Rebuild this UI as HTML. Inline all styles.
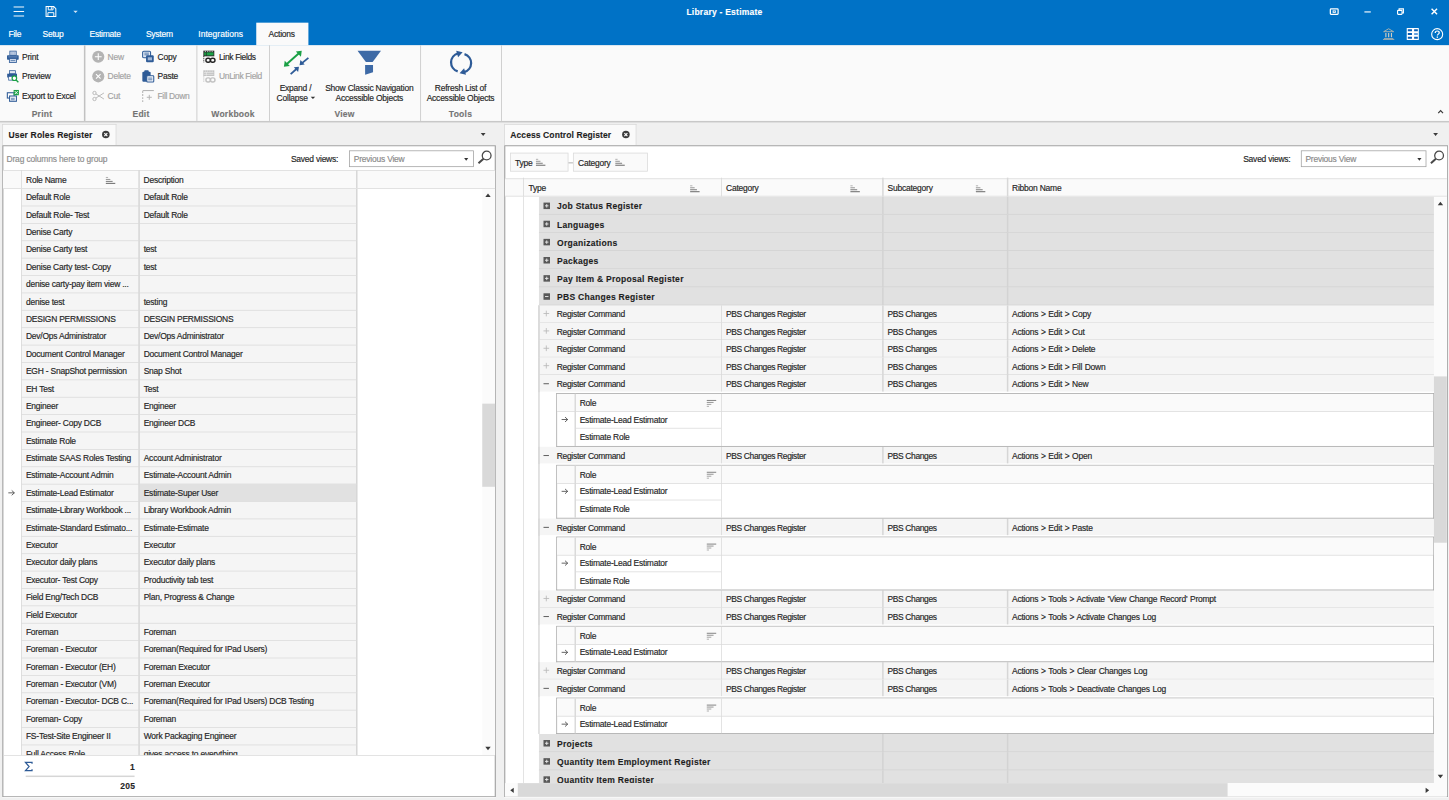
<!DOCTYPE html>
<html><head><meta charset="utf-8"><title>Library - Estimate</title>
<style>
html,body{margin:0;padding:0;}
body{width:1449px;height:800px;overflow:hidden;background:#f0f0f0;position:relative;}
#root{position:absolute;left:0;top:0;width:1916.92px;height:1058.34px;transform:scale(0.7559);transform-origin:0 0;
 font-family:"Liberation Sans",sans-serif;font-size:11.2px;letter-spacing:-0.28px;color:#262626;overflow:hidden;background:#f0f0f0;}
#root div,#root svg{position:absolute;box-sizing:border-box;}
#root svg{overflow:visible;z-index:4;}
.t{white-space:nowrap;line-height:14px;height:14px;-webkit-text-stroke:0.22px currentColor;}
.b{white-space:nowrap;line-height:14px;height:14px;font-weight:bold;font-size:11.3px;letter-spacing:0.3px;-webkit-text-stroke:0.15px currentColor;}
.c{text-align:center;}
.r{text-align:right;}
.g{color:#a3a3a3;}
.clip{overflow:hidden;}
</style></head><body>
<div id="root">
<div style="left:0px;top:0px;width:1916.92px;height:59.53px;background:#0072c6;"></div>
<svg style="left:17.86px;top:8.47px;" width="13.89" height="14.42" viewBox="0 0 14 14"><path d="M0 1h14M0 7h14M0 13h14" stroke="#fff" stroke-width="1.300" fill="none"/></svg>
<svg style="left:59.53px;top:7.94px;" width="14.55" height="14.55" viewBox="0 0 15 15"><path d="M1 .7h10.500l2.800 2.800v10.800H1z" fill="none" stroke="#fff" stroke-width="1.400"/><path d="M4 1v4.200h6.500V1M8.200 1.500v3" fill="none" stroke="#fff" stroke-width="1.300"/><path d="M3.500 14v-5h8v5" fill="none" stroke="#fff" stroke-width="1.300"/></svg>
<svg style="left:96.97px;top:13.89px;" width="5.82" height="3.57" viewBox="0 0 7 4"><path d="M0 0h7l-3.500 3.800z" fill="#d6e6f5"/></svg>
<div class="b c" style="left:858.46px;top:8.88px;width:200px;color:#fff;">Library - Estimate</div>
<svg style="left:1758.57px;top:10.72px;" width="12.17" height="8.73" viewBox="0 0 13 9.5"><rect x=".9" y=".9" width="11.200" height="7.700" rx="1" fill="none" stroke="#fff" stroke-width="1.800"/><path d="M4.200 3h4.600v3.500H4.200z" fill="#fff"/><path d="M6.500 3.600l1.300 1.500H5.200z" fill="#0072c6"/></svg>
<svg style="left:1805.13px;top:14.82px;" width="8.47" height="1.59" viewBox="0 0 9 1.6"><rect width="9" height="1.600" fill="#fff"/></svg>
<svg style="left:1848.26px;top:10.72px;" width="9.53" height="8.73" viewBox="0 0 10 9.5"><path d="M3 2.600V.8h6.200v5.800H7.400" fill="none" stroke="#fff" stroke-width="1.600"/><rect x=".8" y="2.900" width="6.400" height="5.800" rx=".8" fill="none" stroke="#fff" stroke-width="1.600"/></svg>
<svg style="left:1892.71px;top:11.11px;" width="9" height="8.6" viewBox="0 0 9 9"><path d="M.7.7l7.600 7.600M8.300.7L.7 8.300" stroke="#fff" stroke-width="1.950" fill="none"/></svg>
<svg style="left:1829.34px;top:36.78px;" width="16.14" height="15.88" viewBox="0 0 18 18"><path d="M9 1.200L1.500 5.600h15z" fill="none" stroke="#bdb9ac" stroke-width="1.300" stroke-linejoin="round"/><path d="M2 15h14v1.200H2z M.5 16.900h17v1.100H.5z" fill="#bdb9ac"/><path d="M4 7.500h1.700v6.500H4zM8.200 7.500h1.700v6.500H8.200zM12.400 7.500h1.700v6.500h-1.700z" fill="#cfccc2"/></svg>
<svg style="left:1861.36px;top:37.04px;" width="16.01" height="16.01" viewBox="0 0 18 18"><rect x="0" y="0" width="18" height="18" rx=".8" fill="#fff"/><path d="M1.600 2h6.200v2.800H1.600zM11 2h5.500v2.800H11zM1.600 7.600h6.200v2.800H1.600zM1.600 13h6.200v3H1.600zM11 13h5.500v3H11z" fill="#0a5fb4"/><path d="M11 7.600h5.500v2.800H11z" fill="#5b9bdc"/></svg>
<svg style="left:1892.98px;top:36.78px;" width="16.54" height="16.4" viewBox="0 0 18 18"><circle cx="9" cy="9" r="8" fill="none" stroke="#fff" stroke-width="1.600"/><path d="M6.200 7.200c0-1.800 1.200-2.800 2.900-2.800s2.900 1 2.900 2.500c0 2-2.700 2.100-2.700 4.200" fill="none" stroke="#fff" stroke-width="1.800"/><rect x="8.300" y="12.400" width="1.900" height="1.900" fill="#fff"/></svg>
<div class="t" style="left:11.24px;top:37.92px;color:#fff;">File</div>
<div class="t" style="left:56.22px;top:37.92px;color:#fff;">Setup</div>
<div class="t" style="left:118.4px;top:37.92px;color:#fff;">Estimate</div>
<div class="t" style="left:193.01px;top:37.92px;color:#fff;">System</div>
<div class="t" style="left:262.34px;top:37.92px;color:#fff;letter-spacing:0.05px;">Integrations</div>
<div style="left:339.2px;top:29.63px;width:68.4px;height:30.56px;background:#fafafa;"></div>
<div class="t" style="left:355.34px;top:37.92px;">Actions</div>
<div style="left:0px;top:59.53px;width:1916.92px;height:100.94px;background:#fafafa;"></div>
<div style="left:0px;top:160.34px;width:1916.92px;height:1.98px;background:#c8c8c8;"></div>
<div style="left:111.48px;top:59.8px;width:1.4px;height:100.67px;background:#c2c2c2;"></div>
<div style="left:259.65px;top:59.8px;width:1.4px;height:100.67px;background:#c2c2c2;"></div>
<div style="left:355.83px;top:59.8px;width:1.4px;height:100.67px;background:#c2c2c2;"></div>
<div style="left:555.59px;top:59.8px;width:1.4px;height:100.67px;background:#c2c2c2;"></div>
<div style="left:662.62px;top:59.8px;width:1.4px;height:100.67px;background:#c2c2c2;"></div>
<div class="b c" style="left:5.56px;top:144.22px;width:100px;color:#747474;">Print</div>
<div class="b c" style="left:136.53px;top:144.22px;width:100px;color:#747474;">Edit</div>
<div class="b c" style="left:258.24px;top:144.22px;width:100px;color:#747474;">Workbook</div>
<div class="b c" style="left:405.75px;top:144.22px;width:100px;color:#747474;">View</div>
<div class="b c" style="left:559.21px;top:144.22px;width:100px;color:#747474;">Tools</div>
<svg style="left:1902.37px;top:144.6px;" width="7.67" height="5.69" viewBox="0 0 9 6"><path d="M.8 5.200L4.500 1.300 8.200 5.200" fill="none" stroke="#3c3c3c" stroke-width="1.900"/></svg>
<div class="t" style="left:29.1px;top:68.48px;">Print</div>
<div class="t" style="left:29.1px;top:94.41px;">Preview</div>
<div class="t" style="left:29.1px;top:120.47px;">Export to Excel</div>
<div class="t g" style="left:142.21px;top:68.48px;">New</div>
<div class="t g" style="left:142.21px;top:94.41px;">Delete</div>
<div class="t g" style="left:142.21px;top:120.47px;">Cut</div>
<div class="t" style="left:208.36px;top:68.48px;">Copy</div>
<div class="t" style="left:208.36px;top:94.41px;">Paste</div>
<div class="t g" style="left:208.36px;top:120.47px;letter-spacing:-0.42px;">Fill Down</div>
<div class="t" style="left:289.72px;top:68.48px;letter-spacing:-0.45px;">Link Fields</div>
<div class="t g" style="left:289.72px;top:94.41px;letter-spacing:-0.45px;">UnLink Field</div>
<div class="t c" style="left:290.92px;top:110.42px;width:200px;">Expand /</div>
<div class="t c" style="left:290.92px;top:123.38px;width:200px;">Collapse<span style='display:inline-block;width:0;height:0;border-left:3.400px solid transparent;border-right:3.400px solid transparent;border-top:3.900px solid #333;position:relative;top:-3.400px;margin-left:3.600px;margin-right:-1px'></span></div>
<div class="t c" style="left:388.56px;top:110.42px;width:200px;">Show Classic Navigation</div>
<div class="t c" style="left:388.56px;top:123.38px;width:200px;">Accessible Objects</div>
<div class="t c" style="left:509.21px;top:110.42px;width:200px;">Refresh List of</div>
<div class="t c" style="left:509.21px;top:123.38px;width:200px;">Accessible Objects</div>
<svg style="left:9.26px;top:67.01px;" width="16" height="16" viewBox="0 0 16 16"><rect x="4" y=".6" width="8.500" height="5.500" fill="#c3d0e6" stroke="#2e5b97" stroke-width="1"/><path d="M6.800 1v4.500M9.800 1v4.500" stroke="#8fa6cb" stroke-width=".8"/><rect x=".3" y="6" width="15.400" height="6" rx=".8" fill="#2e5b97"/><path d="M2 8.300h12" stroke="#7f9cc8" stroke-width="1"/><rect x="3.400" y="10.600" width="9.400" height="5" fill="#d5dfef" stroke="#2e5b97" stroke-width="1.100"/><path d="M5 13.200h6.200" stroke="#2e5b97" stroke-width=".9"/></svg>
<svg style="left:9.26px;top:92.94px;" width="16" height="16" viewBox="0 0 16 16"><rect x="3.500" y=".5" width="8" height="4" fill="#dfe6f0" stroke="#2e5b97"/><rect x=".5" y="4.500" width="13" height="5" fill="#2e5b97"/><rect x="2.500" y="8" width="6" height="5" fill="#fff" stroke="#2e5b97"/><circle cx="10" cy="10.500" r="3" fill="#fff" stroke="#1aa045" stroke-width="1.600"/><path d="M12.300 12.800l3 3" stroke="#1aa045" stroke-width="1.800"/></svg>
<svg style="left:9.26px;top:119px;" width="16" height="16" viewBox="0 0 16 16"><rect x=".7" y="3.700" width="9" height="7" fill="#fff" stroke="#2e5b97" stroke-width="1.400"/><rect x="3.700" y="8" width="9" height="7" fill="#fff" stroke="#2e5b97" stroke-width="1.400"/><path d="M5.500 11h5M5.500 13h5" stroke="#2e5b97"/><rect x="9" y="0" width="7" height="7" fill="#1aa045"/><path d="M10.500 1.500l4 4M14.500 1.500l-4 4" stroke="#fff" stroke-width="1.200"/></svg>
<svg style="left:121.71px;top:67.01px;" width="16" height="16" viewBox="0 0 16 16"><circle cx="8" cy="8" r="8" fill="#b4b4b4"/><path d="M8 3.500v9M3.500 8h9" stroke="#fff" stroke-width="1.400"/></svg>
<svg style="left:121.71px;top:92.94px;" width="16" height="16" viewBox="0 0 16 16"><circle cx="8" cy="8" r="8" fill="#b4b4b4"/><path d="M5 5l6 6M11 5l-6 6" stroke="#fff" stroke-width="1.500"/></svg>
<svg style="left:121.71px;top:119px;" width="16" height="16" viewBox="0 0 16 16"><circle cx="3" cy="4" r="2.200" fill="none" stroke="#b4b4b4" stroke-width="1.200"/><circle cx="3" cy="12" r="2.200" fill="none" stroke="#b4b4b4" stroke-width="1.200"/><path d="M4.800 5.200L15.500 12M4.800 10.800L15.500 4" stroke="#b4b4b4" stroke-width="1.200" fill="none"/></svg>
<svg style="left:187.86px;top:67.01px;" width="16" height="16" viewBox="0 0 16 16"><rect x=".7" y=".7" width="10.500" height="8.800" rx="1.500" fill="#dfe7f3" stroke="#2e5b97" stroke-width="1.400"/><path d="M3 3.300h6M3 5.500h6" stroke="#2e5b97" stroke-width="1"/><rect x="5.200" y="6.200" width="10.200" height="9.200" rx="1.500" fill="#2e5b97"/><rect x="7.500" y="8.800" width="5.600" height="4" fill="#9fb4d4"/></svg>
<svg style="left:187.86px;top:92.94px;" width="16" height="16" viewBox="0 0 16 16"><rect x=".3" y="1.800" width="11" height="13.500" rx="1.500" fill="#2e5b97"/><rect x="2.800" y="0" width="6" height="3.500" rx="1.200" fill="#2e5b97"/><rect x="6.200" y="7.200" width="9.200" height="8.200" rx="1" fill="#fff" stroke="#2e5b97" stroke-width="1.400"/><path d="M8 10.300h5.600M8 12.600h5.600" stroke="#2e5b97" stroke-width="1.100"/></svg>
<svg style="left:187.86px;top:119px;" width="16" height="16" viewBox="0 0 16 16"><path d="M.7 .8H15.500" fill="none" stroke="#b4b4b4" stroke-width="1.400"/><path d="M.8 1.500V16" fill="none" stroke="#b4b4b4" stroke-width="1.400" stroke-dasharray="2.500 1.500"/><path d="M9.500 6.500v6.500M6.200 9.700h6.600" stroke="#b4b4b4" stroke-width="1.300"/></svg>
<svg style="left:269.22px;top:67.01px;" width="16" height="16" viewBox="0 0 16 16"><rect x="0" y="0" width="14.500" height="7.500" fill="#2d2d2d"/><path d="M2 1h1.500M5 1h1.500M8 1h1.500M11 1h1.500" stroke="#eee" stroke-width="1"/><rect x="1.200" y="2.300" width="12.300" height="4" fill="#1aa045"/><path d="M4 2v5" stroke="#2d2d2d" stroke-width="1"/><path d="M.6 7v8.500" stroke="#2d2d2d" stroke-width="1.200" stroke-dasharray="1.500 1"/><rect x="3.400" y="10" width="6" height="5.400" rx="2.700" fill="none" stroke="#222" stroke-width="1.900"/><rect x="9.400" y="10" width="6" height="5.400" rx="2.700" fill="none" stroke="#222" stroke-width="1.900"/></svg>
<svg style="left:269.22px;top:92.94px;" width="16" height="16" viewBox="0 0 16 16"><rect x="0" y="0" width="14.500" height="7.500" fill="#c2c2c2"/><path d="M2 1h1.500M5 1h1.500M8 1h1.500M11 1h1.500" stroke="#f4f4f4" stroke-width="1"/><path d="M1 3h12.500M1 5.300h12.500M4 2v5" stroke="#ececec" stroke-width=".9"/><path d="M.6 7v8.500" stroke="#c2c2c2" stroke-width="1.200" stroke-dasharray="1.500 1"/><rect x="3.400" y="10" width="6" height="5.400" rx="2.700" fill="none" stroke="#c2c2c2" stroke-width="1.900"/><rect x="9.400" y="10" width="6" height="5.400" rx="2.700" fill="none" stroke="#c2c2c2" stroke-width="1.900"/></svg>
<svg style="left:375.58px;top:66.94px;" width="32" height="32" viewBox="0 0 32 32"><path d="M2 19L20.500 2.500" stroke="#1aa045" stroke-width="2.600"/><path d="M23.200 .2l-7.800 1 6.700 7z" fill="#1aa045"/><path d="M-.4 21.300l7.800-1-6.700-7z" fill="#1aa045"/><path d="M32 9.500L23.500 16.500" stroke="#2e5b97" stroke-width="2.400"/><path d="M20.300 19.200l6.800-.8-5.700-6z" fill="#2e5b97"/><path d="M8.500 31L16.500 24" stroke="#2e5b97" stroke-width="2.400"/><path d="M19.500 21.300l-6.800 .8 5.700 6z" fill="#2e5b97"/></svg>
<svg style="left:473.34px;top:66.94px;" width="31" height="32" viewBox="0 0 31 32"><path d="M0 0h31L20 15h-9z" fill="#3e6aa6"/><path d="M10 19h10.500v9.500L10 32z" fill="#3e6aa6"/></svg>
<svg style="left:595.05px;top:65.94px;" width="30" height="34" viewBox="0 0 30 34"><path d="M11 4.500A12.500 12.500 0 0 0 10.500 28.500" fill="none" stroke="#2e5b97" stroke-width="3"/><path d="M19 29.500A12.500 12.500 0 0 0 19.500 5.500" fill="none" stroke="#2e5b97" stroke-width="3"/><path d="M8.500 1l8.500 2.200-6 6.500z" fill="#2e5b97"/><path d="M21.500 33l-8.500-2.200 6-6.500z" fill="#2e5b97"/></svg>
<div style="left:2.65px;top:164.04px;width:151.61px;height:29.1px;background:#fafafa;border:1px solid #d6d6d6;border-bottom:none;"></div>
<div class="b" style="left:11.24px;top:171.34px;color:#1e1e1e;letter-spacing:0.2px;">User Roles Register</div>
<svg style="left:134.94px;top:173.04px;" width="10" height="10" viewBox="0 0 10 10"><circle cx="5" cy="5" r="5" fill="#3c3c3c"/><path d="M3 3l4 4M7 3L3 7" stroke="#fff" stroke-width="1.500"/></svg>
<svg style="left:636.33px;top:175.55px;" width="6.4" height="3.8" viewBox="0 0 6.4 3.8"><path d="M0 0h6.4L3.2 3.8z" fill="#3a3a3a"/></svg>
<div style="left:2.65px;top:191.82px;width:653.53px;height:862.81px;background:#fff;box-shadow:inset 0 0 0 1.500px #a0a0a0;"></div>
<div class="t" style="left:8.6px;top:203.15px;color:#8d8d8d;letter-spacing:-0.2px;">Drag columns here to group</div>
<div class="t" style="left:384.84px;top:203.15px;">Saved views:</div>
<div style="left:461.97px;top:199.1px;width:164.57px;height:21.43px;background:#fff;border:1px solid #a0a0a0;"></div>
<div class="t" style="left:468.05px;top:202.89px;color:#8a8a8a;">Previous View</div>
<svg style="left:614.23px;top:208.76px;" width="5.5" height="3.5" viewBox="0 0 5.5 3.5"><path d="M0 0h5.500L2.750 3.500z" fill="#333"/></svg>
<svg style="left:631.7px;top:199.1px;" width="18.5" height="18" viewBox="0 0 18.5 18"><circle cx="11.800" cy="6.800" r="5.800" fill="none" stroke="#484848" stroke-width="1.700"/><path d="M7.600 11.100L1 17" stroke="#484848" stroke-width="2.700"/></svg>
<div style="left:3.97px;top:224.66px;width:650.88px;height:24.94px;background:#fafafa;border-top:1px solid #dadada;border-bottom:1px solid #dadada;"></div>
<div style="left:27.59px;top:225.16px;width:1.7px;height:23.94px;background:#d8d8d8;"></div>
<div style="left:183.04px;top:225.16px;width:1.7px;height:23.94px;background:#d8d8d8;"></div>
<div style="left:471.04px;top:225.16px;width:1.7px;height:23.94px;background:#d8d8d8;"></div>
<div class="t" style="left:34.4px;top:230.94px;">Role Name</div>
<svg style="left:140.49px;top:233.63px;" width="12.5" height="10" viewBox="0 0 12.5 10"><path d="M0 0.80h3" stroke="#b4b4b4" stroke-width="1.400"/><path d="M0 3.40h6" stroke="#9c9c9c" stroke-width="1.400"/><path d="M0 6.00h9" stroke="#848484" stroke-width="1.400"/><path d="M0 8.60h12.5" stroke="#707070" stroke-width="1.400"/></svg>
<div class="t" style="left:189.84px;top:230.94px;">Description</div>
<div class="clip" style="left:3.97px;top:249.61px;width:633.68px;height:749.86px;">
<div style="left:24.47px;top:0px;width:443.44px;height:800px;background:#f5f5f5;"></div>
<div style="left:23.62px;top:0px;width:1.7px;height:800px;background:#d6d6d6;"></div>
<div style="left:179.07px;top:0px;width:1.7px;height:800px;background:#d6d6d6;"></div>
<div style="left:467.07px;top:0px;width:1.7px;height:800px;background:#d6d6d6;"></div>
<div style="left:24.47px;top:22px;width:443.44px;height:1.2px;background:#dadada;"></div>
<div class="t" style="left:30.3px;top:4.7px;">Default Role</div>
<div class="t" style="left:186.14px;top:4.7px;">Default Role</div>
<div style="left:24.47px;top:45px;width:443.44px;height:1.2px;background:#dadada;"></div>
<div class="t" style="left:30.3px;top:27.7px;">Default Role- Test</div>
<div class="t" style="left:186.14px;top:27.7px;">Default Role</div>
<div style="left:24.47px;top:68px;width:443.44px;height:1.2px;background:#dadada;"></div>
<div class="t" style="left:30.3px;top:50.7px;">Denise Carty</div>
<div class="t" style="left:186.14px;top:50.7px;"></div>
<div style="left:24.47px;top:91px;width:443.44px;height:1.2px;background:#dadada;"></div>
<div class="t" style="left:30.3px;top:73.7px;">Denise Carty test</div>
<div class="t" style="left:186.14px;top:73.7px;">test</div>
<div style="left:24.47px;top:114px;width:443.44px;height:1.2px;background:#dadada;"></div>
<div class="t" style="left:30.3px;top:96.7px;">Denise Carty test- Copy</div>
<div class="t" style="left:186.14px;top:96.7px;">test</div>
<div style="left:24.47px;top:137px;width:443.44px;height:1.2px;background:#dadada;"></div>
<div class="t" style="left:30.3px;top:119.7px;">denise carty-pay item view ...</div>
<div class="t" style="left:186.14px;top:119.7px;"></div>
<div style="left:24.47px;top:160px;width:443.44px;height:1.2px;background:#dadada;"></div>
<div class="t" style="left:30.3px;top:142.7px;">denise test</div>
<div class="t" style="left:186.14px;top:142.7px;">testing</div>
<div style="left:24.47px;top:183px;width:443.44px;height:1.2px;background:#dadada;"></div>
<div class="t" style="left:30.3px;top:165.7px;">DESIGN PERMISSIONS</div>
<div class="t" style="left:186.14px;top:165.7px;">DESGIN PERMISSIONS</div>
<div style="left:24.47px;top:206px;width:443.44px;height:1.2px;background:#dadada;"></div>
<div class="t" style="left:30.3px;top:188.7px;">Dev/Ops Administrator</div>
<div class="t" style="left:186.14px;top:188.7px;">Dev/Ops Administrator</div>
<div style="left:24.47px;top:229px;width:443.44px;height:1.2px;background:#dadada;"></div>
<div class="t" style="left:30.3px;top:211.7px;">Document Control Manager</div>
<div class="t" style="left:186.14px;top:211.7px;">Document Control Manager</div>
<div style="left:24.47px;top:252px;width:443.44px;height:1.2px;background:#dadada;"></div>
<div class="t" style="left:30.3px;top:234.7px;">EGH - SnapShot permission</div>
<div class="t" style="left:186.14px;top:234.7px;">Snap Shot</div>
<div style="left:24.47px;top:275px;width:443.44px;height:1.2px;background:#dadada;"></div>
<div class="t" style="left:30.3px;top:257.7px;">EH Test</div>
<div class="t" style="left:186.14px;top:257.7px;">Test</div>
<div style="left:24.47px;top:298px;width:443.44px;height:1.2px;background:#dadada;"></div>
<div class="t" style="left:30.3px;top:280.7px;">Engineer</div>
<div class="t" style="left:186.14px;top:280.7px;">Engineer</div>
<div style="left:24.47px;top:321px;width:443.44px;height:1.2px;background:#dadada;"></div>
<div class="t" style="left:30.3px;top:303.7px;">Engineer- Copy DCB</div>
<div class="t" style="left:186.14px;top:303.7px;">Engineer DCB</div>
<div style="left:24.47px;top:344px;width:443.44px;height:1.2px;background:#dadada;"></div>
<div class="t" style="left:30.3px;top:326.7px;">Estimate Role</div>
<div class="t" style="left:186.14px;top:326.7px;"></div>
<div style="left:24.47px;top:367px;width:443.44px;height:1.2px;background:#dadada;"></div>
<div class="t" style="left:30.3px;top:349.7px;">Estimate SAAS Roles Testing</div>
<div class="t" style="left:186.14px;top:349.7px;">Account Administrator</div>
<div style="left:24.47px;top:390px;width:443.44px;height:1.2px;background:#dadada;"></div>
<div class="t" style="left:30.3px;top:372.7px;">Estimate-Account Admin</div>
<div class="t" style="left:186.14px;top:372.7px;">Estimate-Account Admin</div>
<div style="left:180.62px;top:390.5px;width:286.7px;height:23px;background:#e1e1e1;"></div>
<svg style="left:7.01px;top:398px;" width="9" height="8" viewBox="0 0 9 8"><path d="M0 4h8M4.500 .8L8 4 4.500 7.200" fill="none" stroke="#444" stroke-width="1.100"/></svg>
<div style="left:24.47px;top:413px;width:443.44px;height:1.2px;background:#dadada;"></div>
<div class="t" style="left:30.3px;top:395.7px;">Estimate-Lead Estimator</div>
<div class="t" style="left:186.14px;top:395.7px;">Estimate-Super User</div>
<div style="left:24.47px;top:436px;width:443.44px;height:1.2px;background:#dadada;"></div>
<div class="t" style="left:30.3px;top:418.7px;">Estimate-Library Workbook ...</div>
<div class="t" style="left:186.14px;top:418.7px;">Library Workbook Admin</div>
<div style="left:24.47px;top:459px;width:443.44px;height:1.2px;background:#dadada;"></div>
<div class="t" style="left:30.3px;top:441.7px;">Estimate-Standard Estimato...</div>
<div class="t" style="left:186.14px;top:441.7px;">Estimate-Estimate</div>
<div style="left:24.47px;top:482px;width:443.44px;height:1.2px;background:#dadada;"></div>
<div class="t" style="left:30.3px;top:464.7px;">Executor</div>
<div class="t" style="left:186.14px;top:464.7px;">Executor</div>
<div style="left:24.47px;top:505px;width:443.44px;height:1.2px;background:#dadada;"></div>
<div class="t" style="left:30.3px;top:487.7px;">Executor daily plans</div>
<div class="t" style="left:186.14px;top:487.7px;">Executor daily plans</div>
<div style="left:24.47px;top:528px;width:443.44px;height:1.2px;background:#dadada;"></div>
<div class="t" style="left:30.3px;top:510.7px;">Executor- Test Copy</div>
<div class="t" style="left:186.14px;top:510.7px;">Productivity tab test</div>
<div style="left:24.47px;top:551px;width:443.44px;height:1.2px;background:#dadada;"></div>
<div class="t" style="left:30.3px;top:533.7px;">Field Eng/Tech DCB</div>
<div class="t" style="left:186.14px;top:533.7px;">Plan, Progress &amp; Change</div>
<div style="left:24.47px;top:574px;width:443.44px;height:1.2px;background:#dadada;"></div>
<div class="t" style="left:30.3px;top:556.7px;">Field Executor</div>
<div class="t" style="left:186.14px;top:556.7px;"></div>
<div style="left:24.47px;top:597px;width:443.44px;height:1.2px;background:#dadada;"></div>
<div class="t" style="left:30.3px;top:579.7px;">Foreman</div>
<div class="t" style="left:186.14px;top:579.7px;">Foreman</div>
<div style="left:24.47px;top:620px;width:443.44px;height:1.2px;background:#dadada;"></div>
<div class="t" style="left:30.3px;top:602.7px;">Foreman - Executor</div>
<div class="t" style="left:186.14px;top:602.7px;">Foreman(Required for IPad Users)</div>
<div style="left:24.47px;top:643px;width:443.44px;height:1.2px;background:#dadada;"></div>
<div class="t" style="left:30.3px;top:625.7px;">Foreman - Executor (EH)</div>
<div class="t" style="left:186.14px;top:625.7px;">Foreman Executor</div>
<div style="left:24.47px;top:666px;width:443.44px;height:1.2px;background:#dadada;"></div>
<div class="t" style="left:30.3px;top:648.7px;">Foreman - Executor (VM)</div>
<div class="t" style="left:186.14px;top:648.7px;">Foreman Executor</div>
<div style="left:24.47px;top:689px;width:443.44px;height:1.2px;background:#dadada;"></div>
<div class="t" style="left:30.3px;top:671.7px;">Foreman - Executor- DCB C...</div>
<div class="t" style="left:186.14px;top:671.7px;">Foreman(Required for IPad Users) DCB Testing</div>
<div style="left:24.47px;top:712px;width:443.44px;height:1.2px;background:#dadada;"></div>
<div class="t" style="left:30.3px;top:694.7px;">Foreman- Copy</div>
<div class="t" style="left:186.14px;top:694.7px;">Foreman</div>
<div style="left:24.47px;top:735px;width:443.44px;height:1.2px;background:#dadada;"></div>
<div class="t" style="left:30.3px;top:717.7px;">FS-Test-Site Engineer II</div>
<div class="t" style="left:186.14px;top:717.7px;">Work Packaging Engineer</div>
<div style="left:24.47px;top:758px;width:443.44px;height:1.2px;background:#dadada;"></div>
<div class="t" style="left:30.3px;top:740.7px;">Full Access Role</div>
<div class="t" style="left:186.14px;top:740.7px;">gives access to everything</div>
</div>
<div style="left:637.65px;top:249.77px;width:17.2px;height:749.7px;background:#fbfbfb;"></div>
<svg style="left:642.28px;top:255.85px;" width="7.2" height="4.7" viewBox="0 0 7.2 4.7"><path d="M0 4.7h7.2L3.6 0z" fill="#3a3a3a"/></svg>
<svg style="left:642.28px;top:987.7px;" width="7.2" height="4.7" viewBox="0 0 7.2 4.7"><path d="M0 0h7.2L3.6 4.7z" fill="#3a3a3a"/></svg>
<div style="left:637.65px;top:533.93px;width:17.2px;height:110.07px;background:#d9d9d9;"></div>
<div style="left:3.97px;top:999.17px;width:650.88px;height:1.3px;background:#dadada;"></div>
<svg style="left:33.34px;top:1007.81px;" width="10.32" height="12.17" viewBox="0 0 11 13"><path d="M10 2.500V.7H.8l5 5.800-5 5.800H10v-1.800" fill="none" stroke="#2e5b97" stroke-width="1.800"/></svg>
<div class="b r" style="left:100.6px;top:1006.76px;width:78px;">1</div>
<div style="left:34.4px;top:1026.49px;width:143.27px;height:1.1px;background:#d6d6d6;"></div>
<div class="b r" style="left:100.99px;top:1033.36px;width:78px;">205</div>
<div style="left:667.15px;top:164.04px;width:174.76px;height:29.1px;background:#fafafa;border:1px solid #d6d6d6;border-bottom:none;"></div>
<div class="b" style="left:675.09px;top:171.34px;color:#1e1e1e;letter-spacing:0.1px;">Access Control Register</div>
<svg style="left:822.86px;top:173.04px;" width="10" height="10" viewBox="0 0 10 10"><circle cx="5" cy="5" r="5" fill="#3c3c3c"/><path d="M3 3l4 4M7 3L3 7" stroke="#fff" stroke-width="1.500"/></svg>
<svg style="left:1896.15px;top:175.55px;" width="6.4" height="3.8" viewBox="0 0 6.4 3.8"><path d="M0 0h6.4L3.2 3.8z" fill="#3a3a3a"/></svg>
<div style="left:667.28px;top:191.82px;width:1248.58px;height:862.81px;background:#fff;box-shadow:inset 0 0 0 1.500px #a0a0a0;"></div>
<div style="left:674.69px;top:201.75px;width:77.52px;height:25.27px;background:#fafafa;border:1px solid #dadada;"></div>
<div class="t" style="left:681.31px;top:207.65px;">Type</div>
<svg style="left:709.09px;top:209.95px;" width="12.5" height="10" viewBox="0 0 12.5 10"><path d="M0 0.80h3" stroke="#b4b4b4" stroke-width="1.400"/><path d="M0 3.40h6" stroke="#9c9c9c" stroke-width="1.400"/><path d="M0 6.00h9" stroke="#848484" stroke-width="1.400"/><path d="M0 8.60h12.5" stroke="#707070" stroke-width="1.400"/></svg>
<div style="left:752.22px;top:214.77px;width:5.95px;height:1.2px;background:#9a9a9a;"></div>
<div style="left:758.04px;top:201.75px;width:98.95px;height:25.27px;background:#fafafa;border:1px solid #dadada;"></div>
<div class="t" style="left:764.65px;top:207.65px;">Category</div>
<svg style="left:813.6px;top:209.95px;" width="12.5" height="10" viewBox="0 0 12.5 10"><path d="M0 0.80h3" stroke="#b4b4b4" stroke-width="1.400"/><path d="M0 3.40h6" stroke="#9c9c9c" stroke-width="1.400"/><path d="M0 6.00h9" stroke="#848484" stroke-width="1.400"/><path d="M0 8.60h12.5" stroke="#707070" stroke-width="1.400"/></svg>
<div class="t" style="left:1644.66px;top:203.15px;">Saved views:</div>
<div style="left:1720.86px;top:199.1px;width:166.42px;height:21.43px;background:#fff;border:1px solid #a0a0a0;"></div>
<div class="t" style="left:1726.95px;top:202.89px;color:#8a8a8a;">Previous View</div>
<svg style="left:1874.98px;top:208.76px;" width="5.5" height="3.5" viewBox="0 0 5.5 3.5"><path d="M0 0h5.500L2.750 3.500z" fill="#333"/></svg>
<svg style="left:1891.52px;top:199.1px;" width="18.5" height="18" viewBox="0 0 18.5 18"><circle cx="11.800" cy="6.800" r="5.800" fill="none" stroke="#484848" stroke-width="1.700"/><path d="M7.600 11.100L1 17" stroke="#484848" stroke-width="2.700"/></svg>
<div style="left:668.08px;top:235.77px;width:1246.2px;height:24.68px;background:#fafafa;border-top:1px solid #dadada;border-bottom:1px solid #dadada;"></div>
<div style="left:691.75px;top:235.48px;width:1.6px;height:24.47px;background:#d8d8d8;"></div>
<div style="left:953.69px;top:235.48px;width:1.6px;height:24.47px;background:#d8d8d8;"></div>
<div style="left:1167.01px;top:235.48px;width:1.6px;height:24.47px;background:#d8d8d8;"></div>
<div style="left:1332.38px;top:235.48px;width:1.6px;height:24.47px;background:#d8d8d8;"></div>
<div class="t" style="left:699.17px;top:242.18px;">Type</div>
<svg style="left:912.82px;top:245.01px;" width="12.5" height="10" viewBox="0 0 12.5 10"><path d="M0 0.80h3" stroke="#b4b4b4" stroke-width="1.400"/><path d="M0 3.40h6" stroke="#9c9c9c" stroke-width="1.400"/><path d="M0 6.00h9" stroke="#848484" stroke-width="1.400"/><path d="M0 8.60h12.5" stroke="#707070" stroke-width="1.400"/></svg>
<div class="t" style="left:960.44px;top:242.18px;">Category</div>
<svg style="left:1124.88px;top:245.01px;" width="12.5" height="10" viewBox="0 0 12.5 10"><path d="M0 0.80h3" stroke="#b4b4b4" stroke-width="1.400"/><path d="M0 3.40h6" stroke="#9c9c9c" stroke-width="1.400"/><path d="M0 6.00h9" stroke="#848484" stroke-width="1.400"/><path d="M0 8.60h12.5" stroke="#707070" stroke-width="1.400"/></svg>
<div class="t" style="left:1174.1px;top:242.18px;">Subcategory</div>
<svg style="left:1291.18px;top:245.01px;" width="12.5" height="10" viewBox="0 0 12.5 10"><path d="M0 0.80h3" stroke="#b4b4b4" stroke-width="1.400"/><path d="M0 3.40h6" stroke="#9c9c9c" stroke-width="1.400"/><path d="M0 6.00h9" stroke="#848484" stroke-width="1.400"/><path d="M0 8.60h12.5" stroke="#707070" stroke-width="1.400"/></svg>
<div class="t" style="left:1338.8px;top:242.18px;">Ribbon Name</div>
<div class="clip" style="left:668.08px;top:260.22px;width:1228.73px;height:775.63px;">
<div style="left:23.87px;top:0px;width:1.3px;height:900px;background:#dadada;"></div>
<div style="left:44.38px;top:144px;width:1.2px;height:567px;background:#dadada;z-index:1;"></div>
<div style="left:44.98px;top:0px;width:1300px;height:24px;background:#e1e1e1;"></div>
<div style="left:44.98px;top:23.2px;width:1300px;height:1.4px;background:#d3d3d3;"></div>
<div style="left:498.94px;top:0px;width:1.6px;height:24px;background:#d3d3d3;"></div>
<div style="left:664.3px;top:0px;width:1.6px;height:24px;background:#d3d3d3;"></div>
<svg style="left:50.54px;top:7.8px;" width="8.6" height="8.6" viewBox="0 0 8.6 8.6"><rect width="8.600" height="8.600" fill="#585858"/><path d="M2 4.300h4.600" stroke="#ececec" stroke-width="1.200"/><path d="M4.300 2v4.600" stroke="#ececec" stroke-width="1.200"/></svg>
<div class="b" style="left:68.79px;top:5.8px;color:#1e1e1e;letter-spacing:0.36px;">Job Status Register</div>
<div style="left:44.98px;top:24px;width:1300px;height:24px;background:#e1e1e1;"></div>
<div style="left:44.98px;top:47.2px;width:1300px;height:1.4px;background:#d3d3d3;"></div>
<div style="left:498.94px;top:24px;width:1.6px;height:24px;background:#d3d3d3;"></div>
<div style="left:664.3px;top:24px;width:1.6px;height:24px;background:#d3d3d3;"></div>
<svg style="left:50.54px;top:31.8px;" width="8.6" height="8.6" viewBox="0 0 8.6 8.6"><rect width="8.600" height="8.600" fill="#585858"/><path d="M2 4.300h4.600" stroke="#ececec" stroke-width="1.200"/><path d="M4.300 2v4.600" stroke="#ececec" stroke-width="1.200"/></svg>
<div class="b" style="left:68.79px;top:29.8px;color:#1e1e1e;letter-spacing:0.36px;">Languages</div>
<div style="left:44.98px;top:48px;width:1300px;height:24px;background:#e1e1e1;"></div>
<div style="left:44.98px;top:71.2px;width:1300px;height:1.4px;background:#d3d3d3;"></div>
<div style="left:498.94px;top:48px;width:1.6px;height:24px;background:#d3d3d3;"></div>
<div style="left:664.3px;top:48px;width:1.6px;height:24px;background:#d3d3d3;"></div>
<svg style="left:50.54px;top:55.8px;" width="8.6" height="8.6" viewBox="0 0 8.6 8.6"><rect width="8.600" height="8.600" fill="#585858"/><path d="M2 4.300h4.600" stroke="#ececec" stroke-width="1.200"/><path d="M4.300 2v4.600" stroke="#ececec" stroke-width="1.200"/></svg>
<div class="b" style="left:68.79px;top:53.8px;color:#1e1e1e;letter-spacing:0.36px;">Organizations</div>
<div style="left:44.98px;top:72px;width:1300px;height:24px;background:#e1e1e1;"></div>
<div style="left:44.98px;top:95.2px;width:1300px;height:1.4px;background:#d3d3d3;"></div>
<div style="left:498.94px;top:72px;width:1.6px;height:24px;background:#d3d3d3;"></div>
<div style="left:664.3px;top:72px;width:1.6px;height:24px;background:#d3d3d3;"></div>
<svg style="left:50.54px;top:79.8px;" width="8.6" height="8.6" viewBox="0 0 8.6 8.6"><rect width="8.600" height="8.600" fill="#585858"/><path d="M2 4.300h4.600" stroke="#ececec" stroke-width="1.200"/><path d="M4.300 2v4.600" stroke="#ececec" stroke-width="1.200"/></svg>
<div class="b" style="left:68.79px;top:77.8px;color:#1e1e1e;letter-spacing:0.36px;">Packages</div>
<div style="left:44.98px;top:96px;width:1300px;height:24px;background:#e1e1e1;"></div>
<div style="left:44.98px;top:119.2px;width:1300px;height:1.4px;background:#d3d3d3;"></div>
<div style="left:498.94px;top:96px;width:1.6px;height:24px;background:#d3d3d3;"></div>
<div style="left:664.3px;top:96px;width:1.6px;height:24px;background:#d3d3d3;"></div>
<svg style="left:50.54px;top:103.8px;" width="8.6" height="8.6" viewBox="0 0 8.6 8.6"><rect width="8.600" height="8.600" fill="#585858"/><path d="M2 4.300h4.600" stroke="#ececec" stroke-width="1.200"/><path d="M4.300 2v4.600" stroke="#ececec" stroke-width="1.200"/></svg>
<div class="b" style="left:68.79px;top:101.8px;color:#1e1e1e;letter-spacing:0.36px;">Pay Item &amp; Proposal Register</div>
<div style="left:44.98px;top:120px;width:1300px;height:24px;background:#e1e1e1;"></div>
<div style="left:44.98px;top:143.2px;width:1300px;height:1.4px;background:#d3d3d3;"></div>
<div style="left:498.94px;top:120px;width:1.6px;height:24px;background:#d3d3d3;"></div>
<div style="left:664.3px;top:120px;width:1.6px;height:24px;background:#d3d3d3;"></div>
<svg style="left:50.54px;top:127.8px;" width="8.6" height="8.6" viewBox="0 0 8.6 8.6"><rect width="8.600" height="8.600" fill="#585858"/><path d="M2 4.300h4.600" stroke="#ececec" stroke-width="1.200"/></svg>
<div class="b" style="left:68.79px;top:125.8px;color:#1e1e1e;letter-spacing:0.36px;">PBS Changes Register</div>
<div style="left:44.98px;top:144px;width:1300px;height:23px;background:#f5f5f5;"></div>
<div style="left:44.38px;top:144px;width:1.2px;height:23px;background:#dadada;"></div>
<div style="left:44.98px;top:166px;width:1300px;height:1.1px;background:#dadada;"></div>
<div style="left:285.61px;top:144px;width:1.6px;height:23px;background:#d6d6d6;"></div>
<div style="left:498.94px;top:144px;width:1.6px;height:23px;background:#d6d6d6;"></div>
<div style="left:664.3px;top:144px;width:1.6px;height:23px;background:#d6d6d6;"></div>
<svg style="left:50.67px;top:150.8px;" width="7.5" height="7.5" viewBox="0 0 7.5 7.5"><path d="M3.750 0v7.500M0 3.750h7.500" stroke="#b8b8b8" stroke-width="1.100"/></svg>
<div class="t" style="left:68.4px;top:148.3px;letter-spacing:-0.38px;">Register Command</div>
<div class="t" style="left:292.37px;top:148.3px;letter-spacing:-0.48px;">PBS Changes Register</div>
<div class="t" style="left:506.02px;top:148.3px;letter-spacing:-0.48px;">PBS Changes</div>
<div class="t" style="left:670.72px;top:148.3px;word-spacing:0.700px;">Actions &gt; Edit &gt; Copy</div>
<div style="left:44.98px;top:167px;width:1300px;height:23px;background:#f5f5f5;"></div>
<div style="left:44.38px;top:167px;width:1.2px;height:23px;background:#dadada;"></div>
<div style="left:44.98px;top:189px;width:1300px;height:1.1px;background:#dadada;"></div>
<div style="left:285.61px;top:167px;width:1.6px;height:23px;background:#d6d6d6;"></div>
<div style="left:498.94px;top:167px;width:1.6px;height:23px;background:#d6d6d6;"></div>
<div style="left:664.3px;top:167px;width:1.6px;height:23px;background:#d6d6d6;"></div>
<svg style="left:50.67px;top:173.8px;" width="7.5" height="7.5" viewBox="0 0 7.5 7.5"><path d="M3.750 0v7.500M0 3.750h7.500" stroke="#b8b8b8" stroke-width="1.100"/></svg>
<div class="t" style="left:68.4px;top:171.3px;letter-spacing:-0.38px;">Register Command</div>
<div class="t" style="left:292.37px;top:171.3px;letter-spacing:-0.48px;">PBS Changes Register</div>
<div class="t" style="left:506.02px;top:171.3px;letter-spacing:-0.48px;">PBS Changes</div>
<div class="t" style="left:670.72px;top:171.3px;word-spacing:0.700px;">Actions &gt; Edit &gt; Cut</div>
<div style="left:44.98px;top:190px;width:1300px;height:23px;background:#f5f5f5;"></div>
<div style="left:44.38px;top:190px;width:1.2px;height:23px;background:#dadada;"></div>
<div style="left:44.98px;top:212px;width:1300px;height:1.1px;background:#dadada;"></div>
<div style="left:285.61px;top:190px;width:1.6px;height:23px;background:#d6d6d6;"></div>
<div style="left:498.94px;top:190px;width:1.6px;height:23px;background:#d6d6d6;"></div>
<div style="left:664.3px;top:190px;width:1.6px;height:23px;background:#d6d6d6;"></div>
<svg style="left:50.67px;top:196.8px;" width="7.5" height="7.5" viewBox="0 0 7.5 7.5"><path d="M3.750 0v7.500M0 3.750h7.500" stroke="#b8b8b8" stroke-width="1.100"/></svg>
<div class="t" style="left:68.4px;top:194.3px;letter-spacing:-0.38px;">Register Command</div>
<div class="t" style="left:292.37px;top:194.3px;letter-spacing:-0.48px;">PBS Changes Register</div>
<div class="t" style="left:506.02px;top:194.3px;letter-spacing:-0.48px;">PBS Changes</div>
<div class="t" style="left:670.72px;top:194.3px;word-spacing:0.700px;">Actions &gt; Edit &gt; Delete</div>
<div style="left:44.98px;top:213px;width:1300px;height:23px;background:#f5f5f5;"></div>
<div style="left:44.38px;top:213px;width:1.2px;height:23px;background:#dadada;"></div>
<div style="left:44.98px;top:235px;width:1300px;height:1.1px;background:#dadada;"></div>
<div style="left:285.61px;top:213px;width:1.6px;height:23px;background:#d6d6d6;"></div>
<div style="left:498.94px;top:213px;width:1.6px;height:23px;background:#d6d6d6;"></div>
<div style="left:664.3px;top:213px;width:1.6px;height:23px;background:#d6d6d6;"></div>
<svg style="left:50.67px;top:219.8px;" width="7.5" height="7.5" viewBox="0 0 7.5 7.5"><path d="M3.750 0v7.500M0 3.750h7.500" stroke="#b8b8b8" stroke-width="1.100"/></svg>
<div class="t" style="left:68.4px;top:217.3px;letter-spacing:-0.38px;">Register Command</div>
<div class="t" style="left:292.37px;top:217.3px;letter-spacing:-0.48px;">PBS Changes Register</div>
<div class="t" style="left:506.02px;top:217.3px;letter-spacing:-0.48px;">PBS Changes</div>
<div class="t" style="left:670.72px;top:217.3px;word-spacing:0.700px;">Actions &gt; Edit &gt; Fill Down</div>
<div style="left:44.98px;top:236px;width:1300px;height:22px;background:#f5f5f5;"></div>
<div style="left:44.38px;top:236px;width:1.2px;height:23px;background:#dadada;"></div>
<div style="left:285.61px;top:236px;width:1.6px;height:22px;background:#d6d6d6;"></div>
<div style="left:498.94px;top:236px;width:1.6px;height:22px;background:#d6d6d6;"></div>
<div style="left:664.3px;top:236px;width:1.6px;height:22px;background:#d6d6d6;"></div>
<svg style="left:50.93px;top:246.3px;" width="7.2" height="1.3" viewBox="0 0 7.2 1.3"><rect width="7.200" height="1.300" fill="#5c5c5c"/></svg>
<div class="t" style="left:68.4px;top:240.3px;letter-spacing:-0.38px;">Register Command</div>
<div class="t" style="left:292.37px;top:240.3px;letter-spacing:-0.48px;">PBS Changes Register</div>
<div class="t" style="left:506.02px;top:240.3px;letter-spacing:-0.48px;">PBS Changes</div>
<div class="t" style="left:670.72px;top:240.3px;word-spacing:0.700px;">Actions &gt; Edit &gt; New</div>
<div style="left:67.73px;top:259.7px;width:1161px;height:71px;background:#fff;border:1px solid #a2a2a2;border-top-color:#939393;z-index:2;"></div>
<div style="left:68.73px;top:260.7px;width:1159px;height:23.3px;background:#fafafa;z-index:3;"></div>
<div style="left:68.73px;top:283.6px;width:1159px;height:1.1px;background:#dadada;z-index:3;"></div>
<div style="left:92.27px;top:260.7px;width:1.2px;height:69px;background:#dadada;z-index:3;"></div>
<div style="left:285.81px;top:260.7px;width:1.2px;height:69px;background:#dadada;z-index:3;"></div>
<div class="t" style="left:98.82px;top:266px;z-index:4;">Role</div>
<svg style="left:267.23px;top:269px;" width="12.5" height="10" viewBox="0 0 12.5 10"><path d="M0 .8h12.500" stroke="#8a8a8a" stroke-width="1.400"/><path d="M0 3.400h9" stroke="#9a9a9a" stroke-width="1.400"/><path d="M0 6h6" stroke="#aaa" stroke-width="1.400"/><path d="M0 8.600h3" stroke="#b4b4b4" stroke-width="1.400"/></svg>
<svg style="left:75.14px;top:290.7px;" width="9" height="8" viewBox="0 0 9 8"><path d="M0 4h8M4.500 .8L8 4 4.500 7.200" fill="none" stroke="#444" stroke-width="1.100"/></svg>
<div class="t" style="left:98.82px;top:288px;z-index:4;">Estimate-Lead Estimator</div>
<div style="left:92.87px;top:305.7px;width:193.54px;height:1.1px;background:#dadada;z-index:3;"></div>
<div class="t" style="left:98.82px;top:311px;z-index:4;">Estimate Role</div>
<div style="left:44.98px;top:331px;width:1300px;height:22px;background:#f5f5f5;"></div>
<div style="left:44.38px;top:331px;width:1.2px;height:23px;background:#dadada;"></div>
<div style="left:285.61px;top:331px;width:1.6px;height:22px;background:#d6d6d6;"></div>
<div style="left:498.94px;top:331px;width:1.6px;height:22px;background:#d6d6d6;"></div>
<div style="left:664.3px;top:331px;width:1.6px;height:22px;background:#d6d6d6;"></div>
<svg style="left:50.93px;top:341.3px;" width="7.2" height="1.3" viewBox="0 0 7.2 1.3"><rect width="7.200" height="1.300" fill="#5c5c5c"/></svg>
<div class="t" style="left:68.4px;top:335.3px;letter-spacing:-0.38px;">Register Command</div>
<div class="t" style="left:292.37px;top:335.3px;letter-spacing:-0.48px;">PBS Changes Register</div>
<div class="t" style="left:506.02px;top:335.3px;letter-spacing:-0.48px;">PBS Changes</div>
<div class="t" style="left:670.72px;top:335.3px;word-spacing:0.700px;">Actions &gt; Edit &gt; Open</div>
<div style="left:67.73px;top:354.7px;width:1161px;height:71px;background:#fff;border:1px solid #a2a2a2;border-top-color:#939393;z-index:2;"></div>
<div style="left:68.73px;top:355.7px;width:1159px;height:23.3px;background:#fafafa;z-index:3;"></div>
<div style="left:68.73px;top:378.6px;width:1159px;height:1.1px;background:#dadada;z-index:3;"></div>
<div style="left:92.27px;top:355.7px;width:1.2px;height:69px;background:#dadada;z-index:3;"></div>
<div style="left:285.81px;top:355.7px;width:1.2px;height:69px;background:#dadada;z-index:3;"></div>
<div class="t" style="left:98.82px;top:361px;z-index:4;">Role</div>
<svg style="left:267.23px;top:364px;" width="12.5" height="10" viewBox="0 0 12.5 10"><path d="M0 .8h12.500" stroke="#8a8a8a" stroke-width="1.400"/><path d="M0 3.400h9" stroke="#9a9a9a" stroke-width="1.400"/><path d="M0 6h6" stroke="#aaa" stroke-width="1.400"/><path d="M0 8.600h3" stroke="#b4b4b4" stroke-width="1.400"/></svg>
<svg style="left:75.14px;top:385.7px;" width="9" height="8" viewBox="0 0 9 8"><path d="M0 4h8M4.500 .8L8 4 4.500 7.200" fill="none" stroke="#444" stroke-width="1.100"/></svg>
<div class="t" style="left:98.82px;top:383px;z-index:4;">Estimate-Lead Estimator</div>
<div style="left:92.87px;top:400.7px;width:193.54px;height:1.1px;background:#dadada;z-index:3;"></div>
<div class="t" style="left:98.82px;top:406px;z-index:4;">Estimate Role</div>
<div style="left:44.98px;top:426px;width:1300px;height:22px;background:#f5f5f5;"></div>
<div style="left:44.38px;top:426px;width:1.2px;height:23px;background:#dadada;"></div>
<div style="left:285.61px;top:426px;width:1.6px;height:22px;background:#d6d6d6;"></div>
<div style="left:498.94px;top:426px;width:1.6px;height:22px;background:#d6d6d6;"></div>
<div style="left:664.3px;top:426px;width:1.6px;height:22px;background:#d6d6d6;"></div>
<svg style="left:50.93px;top:436.3px;" width="7.2" height="1.3" viewBox="0 0 7.2 1.3"><rect width="7.200" height="1.300" fill="#5c5c5c"/></svg>
<div class="t" style="left:68.4px;top:430.3px;letter-spacing:-0.38px;">Register Command</div>
<div class="t" style="left:292.37px;top:430.3px;letter-spacing:-0.48px;">PBS Changes Register</div>
<div class="t" style="left:506.02px;top:430.3px;letter-spacing:-0.48px;">PBS Changes</div>
<div class="t" style="left:670.72px;top:430.3px;word-spacing:0.700px;">Actions &gt; Edit &gt; Paste</div>
<div style="left:67.73px;top:449.7px;width:1161px;height:71px;background:#fff;border:1px solid #a2a2a2;border-top-color:#939393;z-index:2;"></div>
<div style="left:68.73px;top:450.7px;width:1159px;height:23.3px;background:#fafafa;z-index:3;"></div>
<div style="left:68.73px;top:473.6px;width:1159px;height:1.1px;background:#dadada;z-index:3;"></div>
<div style="left:92.27px;top:450.7px;width:1.2px;height:69px;background:#dadada;z-index:3;"></div>
<div style="left:285.81px;top:450.7px;width:1.2px;height:69px;background:#dadada;z-index:3;"></div>
<div class="t" style="left:98.82px;top:456px;z-index:4;">Role</div>
<svg style="left:267.23px;top:459px;" width="12.5" height="10" viewBox="0 0 12.5 10"><path d="M0 .8h12.500" stroke="#8a8a8a" stroke-width="1.400"/><path d="M0 3.400h9" stroke="#9a9a9a" stroke-width="1.400"/><path d="M0 6h6" stroke="#aaa" stroke-width="1.400"/><path d="M0 8.600h3" stroke="#b4b4b4" stroke-width="1.400"/></svg>
<svg style="left:75.14px;top:480.7px;" width="9" height="8" viewBox="0 0 9 8"><path d="M0 4h8M4.500 .8L8 4 4.500 7.200" fill="none" stroke="#444" stroke-width="1.100"/></svg>
<div class="t" style="left:98.82px;top:478px;z-index:4;">Estimate-Lead Estimator</div>
<div style="left:92.87px;top:495.7px;width:193.54px;height:1.1px;background:#dadada;z-index:3;"></div>
<div class="t" style="left:98.82px;top:501px;z-index:4;">Estimate Role</div>
<div style="left:44.98px;top:521px;width:1300px;height:23px;background:#f5f5f5;"></div>
<div style="left:44.38px;top:521px;width:1.2px;height:23px;background:#dadada;"></div>
<div style="left:44.98px;top:543px;width:1300px;height:1.1px;background:#dadada;"></div>
<div style="left:285.61px;top:521px;width:1.6px;height:23px;background:#d6d6d6;"></div>
<div style="left:498.94px;top:521px;width:1.6px;height:23px;background:#d6d6d6;"></div>
<div style="left:664.3px;top:521px;width:1.6px;height:23px;background:#d6d6d6;"></div>
<svg style="left:50.67px;top:527.8px;" width="7.5" height="7.5" viewBox="0 0 7.5 7.5"><path d="M3.750 0v7.500M0 3.750h7.500" stroke="#b8b8b8" stroke-width="1.100"/></svg>
<div class="t" style="left:68.4px;top:525.3px;letter-spacing:-0.38px;">Register Command</div>
<div class="t" style="left:292.37px;top:525.3px;letter-spacing:-0.48px;">PBS Changes Register</div>
<div class="t" style="left:506.02px;top:525.3px;letter-spacing:-0.48px;">PBS Changes</div>
<div class="t" style="left:670.72px;top:525.3px;word-spacing:0.700px;">Actions &gt; Tools &gt; Activate 'View Change Record' Prompt</div>
<div style="left:44.98px;top:544px;width:1300px;height:22px;background:#f5f5f5;"></div>
<div style="left:44.38px;top:544px;width:1.2px;height:23px;background:#dadada;"></div>
<div style="left:285.61px;top:544px;width:1.6px;height:22px;background:#d6d6d6;"></div>
<div style="left:498.94px;top:544px;width:1.6px;height:22px;background:#d6d6d6;"></div>
<div style="left:664.3px;top:544px;width:1.6px;height:22px;background:#d6d6d6;"></div>
<svg style="left:50.93px;top:554.3px;" width="7.2" height="1.3" viewBox="0 0 7.2 1.3"><rect width="7.200" height="1.300" fill="#5c5c5c"/></svg>
<div class="t" style="left:68.4px;top:548.3px;letter-spacing:-0.38px;">Register Command</div>
<div class="t" style="left:292.37px;top:548.3px;letter-spacing:-0.48px;">PBS Changes Register</div>
<div class="t" style="left:506.02px;top:548.3px;letter-spacing:-0.48px;">PBS Changes</div>
<div class="t" style="left:670.72px;top:548.3px;word-spacing:0.700px;">Actions &gt; Tools &gt; Activate Changes Log</div>
<div style="left:67.73px;top:567.7px;width:1161px;height:48px;background:#fff;border:1px solid #a2a2a2;border-top-color:#939393;z-index:2;"></div>
<div style="left:68.73px;top:568.7px;width:1159px;height:23.3px;background:#fafafa;z-index:3;"></div>
<div style="left:68.73px;top:591.6px;width:1159px;height:1.1px;background:#dadada;z-index:3;"></div>
<div style="left:92.27px;top:568.7px;width:1.2px;height:46px;background:#dadada;z-index:3;"></div>
<div style="left:285.81px;top:568.7px;width:1.2px;height:46px;background:#dadada;z-index:3;"></div>
<div class="t" style="left:98.82px;top:574px;z-index:4;">Role</div>
<svg style="left:267.23px;top:577px;" width="12.5" height="10" viewBox="0 0 12.5 10"><path d="M0 .8h12.500" stroke="#8a8a8a" stroke-width="1.400"/><path d="M0 3.400h9" stroke="#9a9a9a" stroke-width="1.400"/><path d="M0 6h6" stroke="#aaa" stroke-width="1.400"/><path d="M0 8.600h3" stroke="#b4b4b4" stroke-width="1.400"/></svg>
<svg style="left:75.14px;top:598.7px;" width="9" height="8" viewBox="0 0 9 8"><path d="M0 4h8M4.500 .8L8 4 4.500 7.200" fill="none" stroke="#444" stroke-width="1.100"/></svg>
<div class="t" style="left:98.82px;top:596px;z-index:4;">Estimate-Lead Estimator</div>
<div style="left:44.98px;top:616px;width:1300px;height:23px;background:#f5f5f5;"></div>
<div style="left:44.38px;top:616px;width:1.2px;height:23px;background:#dadada;"></div>
<div style="left:44.98px;top:638px;width:1300px;height:1.1px;background:#dadada;"></div>
<div style="left:285.61px;top:616px;width:1.6px;height:23px;background:#d6d6d6;"></div>
<div style="left:498.94px;top:616px;width:1.6px;height:23px;background:#d6d6d6;"></div>
<div style="left:664.3px;top:616px;width:1.6px;height:23px;background:#d6d6d6;"></div>
<svg style="left:50.67px;top:622.8px;" width="7.5" height="7.5" viewBox="0 0 7.5 7.5"><path d="M3.750 0v7.500M0 3.750h7.500" stroke="#b8b8b8" stroke-width="1.100"/></svg>
<div class="t" style="left:68.4px;top:620.3px;letter-spacing:-0.38px;">Register Command</div>
<div class="t" style="left:292.37px;top:620.3px;letter-spacing:-0.48px;">PBS Changes Register</div>
<div class="t" style="left:506.02px;top:620.3px;letter-spacing:-0.48px;">PBS Changes</div>
<div class="t" style="left:670.72px;top:620.3px;word-spacing:0.700px;">Actions &gt; Tools &gt; Clear Changes Log</div>
<div style="left:44.98px;top:639px;width:1300px;height:22px;background:#f5f5f5;"></div>
<div style="left:44.38px;top:639px;width:1.2px;height:23px;background:#dadada;"></div>
<div style="left:285.61px;top:639px;width:1.6px;height:22px;background:#d6d6d6;"></div>
<div style="left:498.94px;top:639px;width:1.6px;height:22px;background:#d6d6d6;"></div>
<div style="left:664.3px;top:639px;width:1.6px;height:22px;background:#d6d6d6;"></div>
<svg style="left:50.93px;top:649.3px;" width="7.2" height="1.3" viewBox="0 0 7.2 1.3"><rect width="7.200" height="1.300" fill="#5c5c5c"/></svg>
<div class="t" style="left:68.4px;top:643.3px;letter-spacing:-0.38px;">Register Command</div>
<div class="t" style="left:292.37px;top:643.3px;letter-spacing:-0.48px;">PBS Changes Register</div>
<div class="t" style="left:506.02px;top:643.3px;letter-spacing:-0.48px;">PBS Changes</div>
<div class="t" style="left:670.72px;top:643.3px;word-spacing:0.700px;">Actions &gt; Tools &gt; Deactivate Changes Log</div>
<div style="left:67.73px;top:662.7px;width:1161px;height:48px;background:#fff;border:1px solid #a2a2a2;border-top-color:#939393;z-index:2;"></div>
<div style="left:68.73px;top:663.7px;width:1159px;height:23.3px;background:#fafafa;z-index:3;"></div>
<div style="left:68.73px;top:686.6px;width:1159px;height:1.1px;background:#dadada;z-index:3;"></div>
<div style="left:92.27px;top:663.7px;width:1.2px;height:46px;background:#dadada;z-index:3;"></div>
<div style="left:285.81px;top:663.7px;width:1.2px;height:46px;background:#dadada;z-index:3;"></div>
<div class="t" style="left:98.82px;top:669px;z-index:4;">Role</div>
<svg style="left:267.23px;top:672px;" width="12.5" height="10" viewBox="0 0 12.5 10"><path d="M0 .8h12.500" stroke="#8a8a8a" stroke-width="1.400"/><path d="M0 3.400h9" stroke="#9a9a9a" stroke-width="1.400"/><path d="M0 6h6" stroke="#aaa" stroke-width="1.400"/><path d="M0 8.600h3" stroke="#b4b4b4" stroke-width="1.400"/></svg>
<svg style="left:75.14px;top:693.7px;" width="9" height="8" viewBox="0 0 9 8"><path d="M0 4h8M4.500 .8L8 4 4.500 7.200" fill="none" stroke="#444" stroke-width="1.100"/></svg>
<div class="t" style="left:98.82px;top:691px;z-index:4;">Estimate-Lead Estimator</div>
<div style="left:44.98px;top:711px;width:1300px;height:24px;background:#e1e1e1;"></div>
<div style="left:44.98px;top:734.2px;width:1300px;height:1.4px;background:#d3d3d3;"></div>
<div style="left:498.94px;top:711px;width:1.6px;height:24px;background:#d3d3d3;"></div>
<div style="left:664.3px;top:711px;width:1.6px;height:24px;background:#d3d3d3;"></div>
<svg style="left:50.54px;top:718.8px;" width="8.6" height="8.6" viewBox="0 0 8.6 8.6"><rect width="8.600" height="8.600" fill="#585858"/><path d="M2 4.300h4.600" stroke="#ececec" stroke-width="1.200"/><path d="M4.300 2v4.600" stroke="#ececec" stroke-width="1.200"/></svg>
<div class="b" style="left:68.79px;top:716.8px;color:#1e1e1e;letter-spacing:0.36px;">Projects</div>
<div style="left:44.98px;top:735px;width:1300px;height:24px;background:#e1e1e1;"></div>
<div style="left:44.98px;top:758.2px;width:1300px;height:1.4px;background:#d3d3d3;"></div>
<div style="left:498.94px;top:735px;width:1.6px;height:24px;background:#d3d3d3;"></div>
<div style="left:664.3px;top:735px;width:1.6px;height:24px;background:#d3d3d3;"></div>
<svg style="left:50.54px;top:742.8px;" width="8.6" height="8.6" viewBox="0 0 8.6 8.6"><rect width="8.600" height="8.600" fill="#585858"/><path d="M2 4.300h4.600" stroke="#ececec" stroke-width="1.200"/><path d="M4.300 2v4.600" stroke="#ececec" stroke-width="1.200"/></svg>
<div class="b" style="left:68.79px;top:740.8px;color:#1e1e1e;letter-spacing:0.36px;">Quantity Item Employment Register</div>
<div style="left:44.98px;top:759px;width:1300px;height:24px;background:#e1e1e1;"></div>
<div style="left:44.98px;top:782.2px;width:1300px;height:1.4px;background:#d3d3d3;"></div>
<div style="left:498.94px;top:759px;width:1.6px;height:24px;background:#d3d3d3;"></div>
<div style="left:664.3px;top:759px;width:1.6px;height:24px;background:#d3d3d3;"></div>
<svg style="left:50.54px;top:766.8px;" width="8.6" height="8.6" viewBox="0 0 8.6 8.6"><rect width="8.600" height="8.600" fill="#585858"/><path d="M2 4.300h4.600" stroke="#ececec" stroke-width="1.200"/><path d="M4.300 2v4.600" stroke="#ececec" stroke-width="1.200"/></svg>
<div class="b" style="left:68.79px;top:764.8px;color:#1e1e1e;letter-spacing:0.36px;">Quantity Item Register</div>
</div>
<div style="left:1897.08px;top:260.62px;width:17.2px;height:775.23px;background:#fbfbfb;"></div>
<svg style="left:1902.1px;top:266.7px;" width="7.2" height="4.7" viewBox="0 0 7.2 4.7"><path d="M0 4.7h7.2L3.6 0z" fill="#3a3a3a"/></svg>
<svg style="left:1902.1px;top:1025.4px;" width="7.2" height="4.7" viewBox="0 0 7.2 4.7"><path d="M0 0h7.2L3.6 4.7z" fill="#3a3a3a"/></svg>
<div style="left:1897.08px;top:497.68px;width:17.2px;height:220.13px;background:#d9d9d9;"></div>
<div style="left:668.08px;top:1035.85px;width:1246.2px;height:18.12px;background:#fbfbfb;"></div>
<svg style="left:674.96px;top:1041.67px;" width="4.7" height="7.2" viewBox="0 0 4.7 7.2"><path d="M4.7 0v7.2L0 3.6z" fill="#3a3a3a"/></svg>
<svg style="left:1886.49px;top:1041.67px;" width="4.7" height="7.2" viewBox="0 0 4.7 7.2"><path d="M0 0v7.2L4.7 3.6z" fill="#3a3a3a"/></svg>
<div style="left:685.28px;top:1035.85px;width:938.88px;height:18.12px;background:#d9d9d9;"></div>
</div>
</body></html>
